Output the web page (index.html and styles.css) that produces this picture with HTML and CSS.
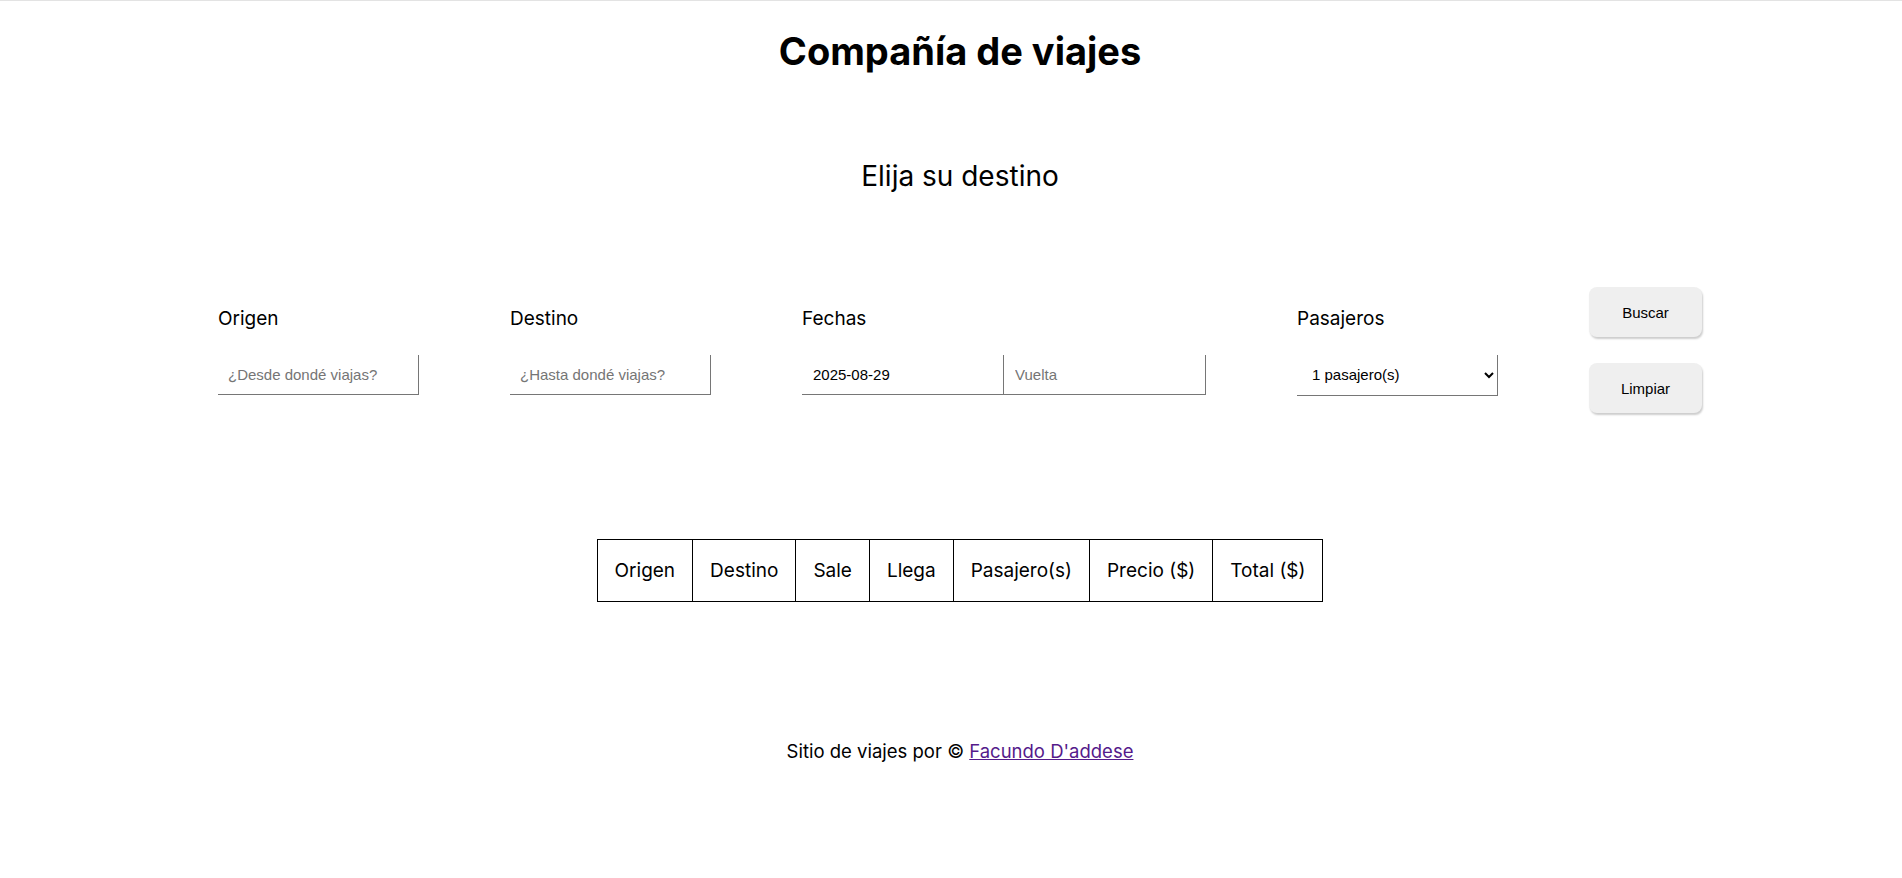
FILE: index.html
```html
<!DOCTYPE html>
<html lang="es">
<head>
    <meta charset="UTF-8">
    <meta name="viewport" content="width=device-width, initial-scale=1.0">
    <title>Compañía de viajes</title>
    <link rel="stylesheet" href="styles.css">
</head>
<body>
    <header class="header">
        <h1>Compañía de viajes</h1>
    </header>

    <main>
        <h2 class="subtitle">Elija su destino</h2>

        <form class="search" onsubmit="return false;">
            <div class="field">
                <label for="origen">Origen</label>
                <input type="text" id="origen" placeholder="¿Desde dondé viajas?">
            </div>
            <div class="field">
                <label for="destino">Destino</label>
                <input type="text" id="destino" placeholder="¿Hasta dondé viajas?">
            </div>
            <div class="field">
                <label for="ida">Fechas</label>
                <div class="dates">
                    <input type="text" id="ida" value="2025-08-29">
                    <input type="text" id="vuelta" placeholder="Vuelta">
                </div>
            </div>
            <div class="field">
                <label for="pasajeros">Pasajeros</label>
                <select id="pasajeros">
                    <option>1 pasajero(s)</option>
                    <option>2 pasajero(s)</option>
                    <option>3 pasajero(s)</option>
                    <option>4 pasajero(s)</option>
                </select>
            </div>
            <div class="actions">
                <button type="button" id="buscarBtn">Buscar</button>
                <button type="reset" id="limpiarBtn">Limpiar</button>
            </div>
        </form>

        <table class="results">
            <thead>
                <tr>
                    <th>Origen</th>
                    <th>Destino</th>
                    <th>Sale</th>
                    <th>Llega</th>
                    <th>Pasajero(s)</th>
                    <th>Precio ($)</th>
                    <th>Total ($)</th>
                </tr>
            </thead>
            <tbody id="resultsBody"></tbody>
        </table>
    </main>

    <footer class="footer">
        <p>Sitio de viajes por © <a href="#">Facundo D'addese</a></p>
    </footer>
</body>
</html>
```

FILE: styles.css
```css
body {
    margin: 0;
    padding-left: 18px; /* page was laid out 1920 wide */
    border-top: 1px solid #e3e3e3;
    font-family: "Inter", "Noto Sans", sans-serif;
    color: #000;
    background-color: #fff;
}
.header h1 {
    margin: 0;
    padding-top: 25px;
    text-align: center;
    font-size: 38px;
    font-weight: 700;
    line-height: 50px;
}
.subtitle {
    margin: 80px 0 0 0;
    text-align: center;
    font-size: 28px;
    font-weight: 400;
    line-height: 40px;
}
.search {
    display: flex;
    justify-content: center;
    align-items: center;
    gap: 91px;
    margin-top: 91px;
}
.field {
    display: flex;
    flex-direction: column;
}
.field label {
    font-size: 19px;
    line-height: 28px;
    margin-bottom: 22px;
}
input[type="text"] {
    width: 201px;
    height: 40px;
    box-sizing: border-box;
    padding: 0 10px;
    border: none;
    border-right: 1px solid #767676;
    border-bottom: 1px solid #767676;
    font-family: "Liberation Sans", Arial, sans-serif;
    font-size: 15px;
    color: #000;
    outline: none;
}
input::placeholder {
    color: #757575;
}
.dates {
    display: flex;
}
.dates input[type="text"] {
    width: 202px;
    padding-left: 11px;
}
select {
    width: 201px;
    height: 41px;
    box-sizing: border-box;
    padding: 0 6px 0 11px;
    border: none;
    border-right: 1px solid #767676;
    border-bottom: 1px solid #767676;
    background-color: #fff;
    font-family: "Liberation Sans", Arial, sans-serif;
    font-size: 15px;
    color: #000;
}
.actions {
    display: flex;
    flex-direction: column;
    gap: 26px;
}
button {
    width: 113px;
    height: 50px;
    border: none;
    border-radius: 8px;
    background-color: #efefef;
    box-shadow: 1px 2px 2px rgba(0, 0, 0, 0.2);
    font-family: "Liberation Sans", Arial, sans-serif;
    font-size: 15px;
    color: #000;
    cursor: pointer;
}
button:hover {
    background-color: #e5e5e5;
}
.results {
    margin: 126px auto 0 auto;
    border-collapse: collapse;
}
.results th {
    border: 1px solid #000;
    padding: 0 17px;
    height: 61px;
    font-size: 19px;
    font-weight: 400;
}
.footer {
    margin-top: 136px;
    text-align: center;
}
.footer p {
    margin: 0;
    font-size: 18.5px;
    line-height: 26px;
}
.footer a {
    color: #551a8b;
}
```
